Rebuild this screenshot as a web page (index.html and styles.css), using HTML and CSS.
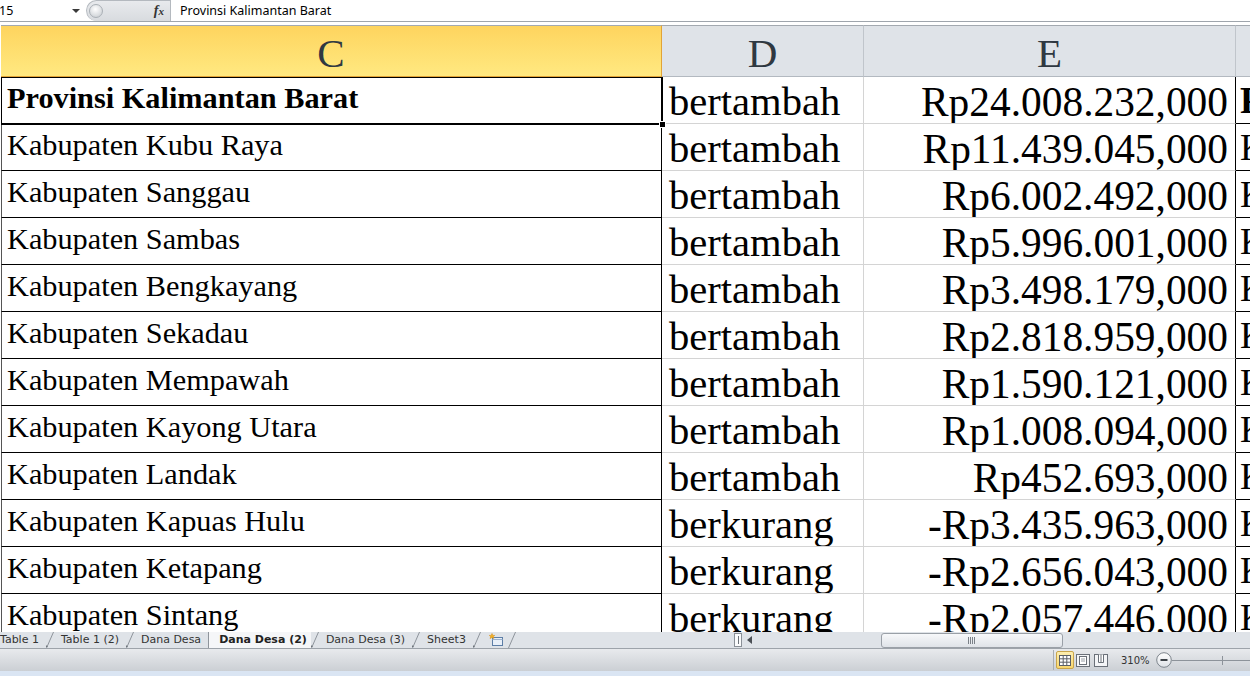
FILE: index.html
```html
<!DOCTYPE html>
<html>
<head>
<meta charset="utf-8">
<title>Dana Desa</title>
<link rel="stylesheet" href="styles.css">
</head>
<body>
<div class="app">
  <div class="fbar">
    <div class="namebox"><span class="nb-text">15</span><span class="nb-arrow"></span></div>
    <div class="fpill"><span class="fpill-knob"></span><span class="fx">f<span class="fx-x">x</span></span></div>
    <div class="finput">Provinsi Kalimantan Barat</div>
  </div>
  <div class="fgap"></div>
  <div class="sheet">
    <div class="grid">
      <div class="hc hc-sel">C</div>
      <div class="hc">D</div>
      <div class="hc">E</div>
      <div class="hc hc-f"></div>

      <div class="cell cc bold sel-cell">Provinsi Kalimantan Barat</div>
      <div class="cell cd">bertambah</div>
      <div class="cell ce">Rp24.008.232,000</div>
      <div class="cell cf bold">Provinsi</div>

      <div class="cell cc">Kabupaten Kubu Raya</div>
      <div class="cell cd">bertambah</div>
      <div class="cell ce">Rp11.439.045,000</div>
      <div class="cell cf">Kabupaten</div>

      <div class="cell cc">Kabupaten Sanggau</div>
      <div class="cell cd">bertambah</div>
      <div class="cell ce">Rp6.002.492,000</div>
      <div class="cell cf">Kabupaten</div>

      <div class="cell cc">Kabupaten Sambas</div>
      <div class="cell cd">bertambah</div>
      <div class="cell ce">Rp5.996.001,000</div>
      <div class="cell cf">Kabupaten</div>

      <div class="cell cc">Kabupaten Bengkayang</div>
      <div class="cell cd">bertambah</div>
      <div class="cell ce">Rp3.498.179,000</div>
      <div class="cell cf">Kabupaten</div>

      <div class="cell cc">Kabupaten Sekadau</div>
      <div class="cell cd">bertambah</div>
      <div class="cell ce">Rp2.818.959,000</div>
      <div class="cell cf">Kabupaten</div>

      <div class="cell cc">Kabupaten Mempawah</div>
      <div class="cell cd">bertambah</div>
      <div class="cell ce">Rp1.590.121,000</div>
      <div class="cell cf">Kabupaten</div>

      <div class="cell cc">Kabupaten Kayong Utara</div>
      <div class="cell cd">bertambah</div>
      <div class="cell ce">Rp1.008.094,000</div>
      <div class="cell cf">Kabupaten</div>

      <div class="cell cc">Kabupaten Landak</div>
      <div class="cell cd">bertambah</div>
      <div class="cell ce">Rp452.693,000</div>
      <div class="cell cf">Kabupaten</div>

      <div class="cell cc">Kabupaten Kapuas Hulu</div>
      <div class="cell cd">berkurang</div>
      <div class="cell ce">-Rp3.435.963,000</div>
      <div class="cell cf">Kabupaten</div>

      <div class="cell cc">Kabupaten Ketapang</div>
      <div class="cell cd">berkurang</div>
      <div class="cell ce">-Rp2.656.043,000</div>
      <div class="cell cf">Kabupaten</div>

      <div class="cell cc">Kabupaten Sintang</div>
      <div class="cell cd">berkurang</div>
      <div class="cell ce">-Rp2.057.446,000</div>
      <div class="cell cf">Kabupaten</div>
    </div>
  </div>
  <div class="tabbar">
    <div class="tabs">
      <span class="tab tab-first">Table 1</span>
      <svg class="sep" width="8" height="16" viewBox="0 0 8 16"><path d="M0.5 16 L7.5 0" stroke="#8e949b" stroke-width="1" fill="none"/><path d="M0 15 L2 15 L0 13 Z" fill="#6d737a"/></svg>
      <span class="tab">Table 1 (2)</span>
      <svg class="sep" width="8" height="16" viewBox="0 0 8 16"><path d="M0.5 16 L7.5 0" stroke="#8e949b" stroke-width="1" fill="none"/><path d="M0 15 L2 15 L0 13 Z" fill="#6d737a"/></svg>
      <span class="tab">Dana Desa</span>
      <span class="tab tab-active">Dana Desa (2)</span>
      <svg class="sep" width="8" height="16" viewBox="0 0 8 16"><path d="M0.5 16 L7.5 0" stroke="#8e949b" stroke-width="1" fill="none"/><path d="M0 15 L2 15 L0 13 Z" fill="#6d737a"/></svg>
      <span class="tab">Dana Desa (3)</span>
      <svg class="sep" width="8" height="16" viewBox="0 0 8 16"><path d="M0.5 16 L7.5 0" stroke="#8e949b" stroke-width="1" fill="none"/><path d="M0 15 L2 15 L0 13 Z" fill="#6d737a"/></svg>
      <span class="tab">Sheet3</span>
      <svg class="sep" width="8" height="16" viewBox="0 0 8 16"><path d="M0.5 16 L7.5 0" stroke="#8e949b" stroke-width="1" fill="none"/><path d="M0 15 L2 15 L0 13 Z" fill="#6d737a"/></svg>
      <span class="tab tab-icon"><svg width="15" height="14" viewBox="0 0 15 14"><rect x="3.5" y="4.5" width="10" height="8" fill="#e8eff8" stroke="#5d7ea6"/><path d="M3.5 6.5 H13.5" stroke="#9db4d0"/><path d="M3 0.5 L3.8 2.4 L5.8 2.4 L4.3 3.6 L4.9 5.6 L3 4.4 L1.1 5.6 L1.7 3.6 L0.2 2.4 L2.2 2.4 Z" fill="#f3b21f" stroke="#d98a0c" stroke-width="0.5"/></svg></span>
      <svg class="sep" width="8" height="16" viewBox="0 0 8 16"><path d="M0.5 16 L7.5 0" stroke="#8e949b" stroke-width="1" fill="none"/></svg>
    </div>
    <div class="hscroll">
      <span class="splitbox"><span class="splitbox-line"></span></span>
      <span class="arrow-left"></span>
      <span class="thumb"><svg width="8" height="7" viewBox="0 0 8 7"><path d="M0.5 0 V7 M2.5 0 V7 M4.5 0 V7 M6.5 0 V7" stroke="#7b8188" stroke-width="1"/></svg></span>
    </div>
  </div>
  <div class="status">
    <span class="vsep"></span>
    <span class="vbtn vbtn-active"><svg width="12" height="11" viewBox="0 0 12 11"><rect x="0.5" y="0.5" width="11" height="10" fill="#fff" stroke="#5a5f66"/><path d="M4.2 0.5 V10.5 M7.8 0.5 V10.5 M0.5 3.8 H11.5 M0.5 7.2 H11.5" stroke="#5a5f66"/></svg></span>
    <span class="vbtn vbtn-2"><svg width="14" height="13" viewBox="0 0 14 13"><rect x="0.5" y="0.5" width="13" height="12" fill="#f4f5f7" stroke="#6a7078"/><rect x="3.5" y="2.5" width="7" height="8" fill="#fff" stroke="#6a7078"/><path d="M5 5 H9 M5 7 H9" stroke="#9aa0a7"/></svg></span>
    <span class="vbtn vbtn-3"><svg width="14" height="13" viewBox="0 0 14 13"><rect x="0.5" y="0.5" width="13" height="12" fill="#f4f5f7" stroke="#6a7078"/><path d="M4.5 0.5 V8.5 H9.5 V0.5" fill="#fff" stroke="#6a7078"/><path d="M7 0.5 V8.5" stroke="#6a7078"/></svg></span>
    <span class="zoomtext">310%</span>
    <svg class="zminus" width="16" height="16" viewBox="0 0 16 16"><defs><linearGradient id="zg" x1="0" y1="0" x2="0" y2="1"><stop offset="0" stop-color="#ffffff"/><stop offset="1" stop-color="#dde1e6"/></linearGradient></defs><circle cx="8" cy="8" r="7.3" fill="url(#zg)" stroke="#7d848c"/><path d="M4.5 8 H11.5" stroke="#3d4248" stroke-width="2"/></svg>
    <svg class="slider" width="78" height="16" viewBox="0 0 78 16"><path d="M0 8.5 H78" stroke="#8d939a"/><path d="M50.5 4 V13" stroke="#8d939a"/></svg>
  </div>
  <div class="band"></div>
</div>
</body>
</html>
```

FILE: styles.css
```css
html, body {
  margin: 0;
  padding: 0;
  background: #ffffff;
}

body {
  width: 1250px;
  height: 676px;
  overflow: hidden;
  font-family: "Liberation Serif", "Times New Roman", serif;
}

.app {
  display: flex;
  flex-direction: column;
  width: 1250px;
  height: 676px;
}

/* formula bar */
.fbar {
  height: 22px;
  box-sizing: border-box;
  border-bottom: 1px solid #9fa5ac;
  display: flex;
  background: #ffffff;
  font-family: "Noto Sans", "DejaVu Sans", sans-serif;
  font-size: 12px;
  color: #000;
}

.namebox {
  width: 84px;
  display: flex;
  align-items: center;
}

.nb-text {
  margin-left: -1px;
  line-height: 21px;
  font-size: 12.5px;
}

.nb-arrow {
  margin-left: auto;
  margin-right: 4px;
  width: 0;
  height: 0;
  border-left: 4px solid transparent;
  border-right: 4px solid transparent;
  border-top: 4px solid #3a3a3a;
}

.fpill {
  margin-left: 2px;
  width: 84px;
  height: 21px;
  box-sizing: border-box;
  background: linear-gradient(#e8eaed, #d8dbdf);
  border: 1px solid #b4b9bf;
  border-right: none;
  border-bottom: none;
  border-radius: 11px 0 0 11px;
  display: flex;
  align-items: center;
}

.fpill-knob {
  width: 12px;
  height: 12px;
  border-radius: 50%;
  border: 1px solid #aab0b6;
  background: radial-gradient(circle at 45% 35%, #ffffff, #c3c8cd);
  margin-left: 2px;
}

.fx {
  margin-left: auto;
  margin-right: 6px;
  font-family: "Liberation Serif", serif;
  font-style: italic;
  font-weight: bold;
  font-size: 14px;
  color: #333;
  line-height: 14px;
}

.fx-x {
  font-size: 11px;
}

.finput {
  flex: 1;
  border-left: 1px solid #b4b9bf;
  padding-left: 9px;
  line-height: 21px;
  font-size: 12.5px;
}

.fgap {
  height: 3px;
  background: #ffffff;
}

/* sheet */
.sheet {
  flex: 1;
  overflow: hidden;
  background: #ffffff;
}

.grid {
  display: grid;
  grid-template-columns: 661px 202px 372px 1fr;
  grid-template-rows: 52px;
  grid-auto-rows: 47px;
  padding-left: 1px;
}

.hc {
  box-sizing: border-box;
  border-top: 1px solid #a3a9b0;
  border-bottom: 1px solid #b3b9c0;
  border-right: 1px solid #c0c5cb;
  background: #dfe3e8;
  display: flex;
  align-items: center;
  justify-content: center;
  font-size: 41px;
  line-height: 40px;
  padding-top: 3px;
  color: #2f3841;
}

.hc-sel {
  background: linear-gradient(#fed45e, #ffe981);
  border-right-color: #e2a437;
  border-bottom-color: #e2a437;
}

.hc-f {
  border-right: none;
}

.cell {
  box-sizing: border-box;
  display: flex;
  align-items: flex-end;
  white-space: nowrap;
  overflow: hidden;
  color: #000;
}

.cc {
  border-left: 1px solid #555;
  border-right: 1px solid #000;
  border-bottom: 1px solid #000;
  font-size: 30.3px;
  line-height: 30px;
  padding: 0 0 10px 5px;
}

.bold {
  font-weight: bold;
}

.cd {
  border-right: 1px solid #d4d4d4;
  border-bottom: 1px solid #d4d4d4;
  font-size: 40.6px;
  line-height: 40px;
  padding: 0 0 1px 7px;
}

.ce {
  border-right: 1px solid #000;
  border-bottom: 1px solid #d4d4d4;
  font-size: 41.4px;
  line-height: 40px;
  justify-content: flex-end;
  padding: 0 7px 1px 0;
}

.cf {
  border-bottom: 1px solid #000;
  font-size: 37px;
  line-height: 37px;
  padding: 0 0 4px 4px;
}

.sel-cell {
  position: relative;
  overflow: visible;
  z-index: 2;
}

.sel-cell::after {
  content: "";
  position: absolute;
  left: -1px;
  top: 0;
  right: -2px;
  bottom: -2px;
  border: 2px solid #000;
  border-top-width: 1px;
  border-left-width: 1px;
}

.sel-cell::before {
  content: "";
  position: absolute;
  right: -5px;
  bottom: -5px;
  width: 5px;
  height: 5px;
  background: #000;
  border: 1px solid #fff;
  z-index: 3;
}

/* sheet tabs + scrollbar */
.tabbar {
  height: 17px;
  box-sizing: border-box;
  border-bottom: 1px solid #9da3aa;
  background: #dfe3e8;
  display: flex;
  font-family: "DejaVu Sans", sans-serif;
  font-size: 11px;
  color: #333;
}

.tabs {
  width: 733px;
  display: flex;
  align-items: stretch;
}

.tab {
  padding: 0 7px;
  line-height: 16px;
  white-space: nowrap;
}

.tab-first {
  padding-left: 0;
}

.tab-active {
  background: #f5f6f8;
  font-weight: bold;
  color: #222;
  border-left: 1px solid #8e949b;
  padding-left: 10px;
  padding-right: 4px;
}

.tab-icon {
  display: flex;
  align-items: center;
  padding: 0 4px 0 8px;
}

.sep {
  display: block;
  flex: none;
}

.hscroll {
  flex: 1;
  display: flex;
  align-items: center;
}

.splitbox {
  margin-left: 1px;
  width: 8px;
  height: 14px;
  box-sizing: border-box;
  border: 1px solid #8a9097;
  background: #fafbfc;
  display: flex;
  justify-content: center;
  align-items: center;
}

.splitbox-line {
  width: 1px;
  height: 8px;
  background: #6d737a;
}

.arrow-left {
  margin-left: 5px;
  width: 0;
  height: 0;
  border-top: 4px solid transparent;
  border-bottom: 4px solid transparent;
  border-right: 5px solid #4a4f55;
}

.thumb {
  margin-left: 129px;
  width: 182px;
  height: 15px;
  box-sizing: border-box;
  border: 1px solid #9aa0a7;
  border-radius: 3px;
  background: linear-gradient(#f7f8fa, #dfe3e8);
  display: flex;
  justify-content: center;
  align-items: center;
}

/* status bar */
.status {
  height: 22px;
  background: linear-gradient(#e8eaed, #cbcfd4);
  display: flex;
  align-items: center;
  justify-content: flex-end;
  font-family: "DejaVu Sans", sans-serif;
  font-size: 10px;
  color: #333;
}

.vsep {
  width: 1px;
  height: 20px;
  background: #a8adb3;
  margin-right: 2px;
}

.vbtn {
  height: 18px;
  box-sizing: border-box;
  display: flex;
  align-items: center;
  justify-content: center;
}

.vbtn-active {
  width: 18px;
  margin-right: 1px;
  border: 1px solid #c9a54a;
  border-radius: 2px;
  background: linear-gradient(#fdeeb0, #f8d66e);
}

.vbtn-2 {
  width: 16px;
  margin-right: 2px;
}

.vbtn-3 {
  width: 16px;
  margin-right: 12px;
}

.zoomtext {
  width: 29px;
  margin-right: 6px;
  white-space: nowrap;
}

.zminus,
.slider {
  display: block;
  flex: none;
}

.band {
  height: 5px;
  background: #dae5f3;
}
```
